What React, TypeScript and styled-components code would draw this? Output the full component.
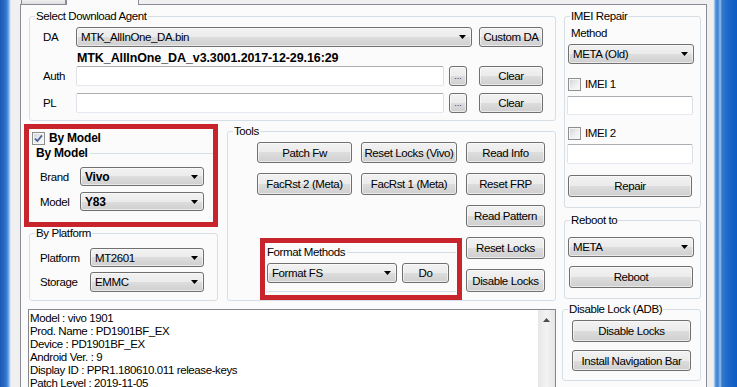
import styled, { createGlobalStyle } from "styled-components";

const GlobalStyle = createGlobalStyle`
  html, body { margin: 0; padding: 0; }
  body {
    width: 737px;
    height: 387px;
    overflow: hidden;
    font-family: "Liberation Sans", Arial, sans-serif;
    font-size: 11.5px;
    letter-spacing: -0.4px;
    color: #000;
  }
`;

const RED = "#c8242c";

const Screen = styled.div`
  display: flex;
  width: 737px;
  height: 387px;
  overflow: hidden;
`;

const FrameLeft = styled.div`
  width: 11px;
  flex: none;
  background: linear-gradient(to right, #1b57b0 0px, #2a6dc8 5px, #3f82d6 7px, #7fb0e6 9px, #c6dbf1 10px, #e9eef5 11px);
`;

const FrameRight = styled.div`
  width: 24px;
  flex: none;
  background: linear-gradient(to right, #eef2f7 0px, #d4e3f4 1px, #6fa3de 2px, #3f82d3 4px, #5b97dc 6px, #9cc3ec 7px, #3479d0 9px, #1f69c9 14px, #0e5cc4 24px);
`;

const WindowBody = styled.div`
  flex: 1;
  min-width: 0;
  display: flex;
  flex-direction: column;
  background: #f0f0f0;
  padding: 0 6px 0 9px;
`;

const TabStrip = styled.div`
  display: flex;
  height: 4px;
  padding-left: 1px;
`;

const Tab = styled.div<{ $active?: boolean }>`
  box-sizing: border-box;
  width: ${(p) => (p.$active ? 73 : 45)}px;
  height: ${(p) => (p.$active ? 5 : 4)}px;
  border-left: 1px solid #898c95;
  border-right: 1px solid #898c95;
  background: ${(p) => (p.$active ? "#fbfbfb" : "linear-gradient(#f0f0f0, #dedede)")};
  position: relative;
  z-index: 1;
`;

const Page = styled.div`
  flex: 1;
  border: 1px solid #898c95;
  border-bottom: none;
  background: #fbfbfb;
  padding: 4px 5px 0 8px;
  display: grid;
  grid-template-columns: 527px 137px;
  column-gap: 8px;
  align-items: start;
`;

const Column = styled.div`
  display: flex;
  flex-direction: column;
  min-width: 0;
`;

const GroupBox = styled.fieldset<{ $mt?: number; $ml?: number }>`
  margin: ${(p) => p.$mt ?? 0}px 0 0 ${(p) => p.$ml ?? 0}px;
  padding: 0;
  min-width: 0;
  border: 1px solid #d5dfe5;
  border-radius: 3px;
`;

const Legend = styled.legend`
  padding: 0 1px;
  margin-left: 5px;
  height: 14px;
  line-height: 14px;
`;

const Body = styled.div<{ $pad: string }>`
  padding: ${(p) => p.$pad};
  display: flex;
  flex-direction: column;
`;

const FormRow = styled.div<{ $mt?: number; $h?: number }>`
  display: flex;
  align-items: center;
  margin-top: ${(p) => p.$mt ?? 0}px;
  height: ${(p) => p.$h ?? 20}px;
`;

const RowLabel = styled.div<{ $w: number; $pad: number }>`
  box-sizing: border-box;
  width: ${(p) => p.$w}px;
  padding-left: ${(p) => p.$pad}px;
  flex: none;
`;

const Button = styled.button<{ $w: number; $h: number; $ml?: number; $mt?: number }>`
  box-sizing: border-box;
  width: ${(p) => p.$w}px;
  height: ${(p) => p.$h}px;
  margin: ${(p) => p.$mt ?? 0}px 0 0 ${(p) => p.$ml ?? 0}px;
  flex: none;
  padding: 0;
  border: 1px solid #707070;
  border-radius: 3px;
  background: linear-gradient(to bottom, #f2f2f2 0%, #ebebeb 50%, #dddddd 50%, #cfcfcf 100%);
  box-shadow: inset 0 0 0 1px rgba(255, 255, 255, 0.55);
  font: inherit;
  letter-spacing: inherit;
  color: #000;
  display: flex;
  align-items: center;
  justify-content: center;
`;

const DotsButton = styled(Button)`
  font-size: 9px;
  letter-spacing: 0;
  color: #333;
  align-items: flex-end;
  padding-bottom: 4px;
`;

const ToolButton = styled(Button)<{ $c: number; $r: number }>`
  width: auto;
  height: auto;
  grid-column: ${(p) => p.$c};
  grid-row: ${(p) => p.$r};
`;

const ComboBox = styled.div<{ $w: number; $h: number; $bold?: boolean; $mt?: number; $ml?: number }>`
  box-sizing: border-box;
  width: ${(p) => p.$w}px;
  height: ${(p) => p.$h}px;
  margin: ${(p) => p.$mt ?? 0}px 0 0 ${(p) => p.$ml ?? 0}px;
  flex: none;
  display: flex;
  align-items: center;
  justify-content: space-between;
  padding: 0 5px 0 4px;
  border: 1px solid #707070;
  border-radius: 3px;
  background: linear-gradient(to bottom, #f2f2f2 0%, #ebebeb 50%, #dddddd 50%, #cfcfcf 100%);
  box-shadow: inset 0 0 0 1px rgba(255, 255, 255, 0.55);
  font-weight: ${(p) => (p.$bold ? 700 : 400)};
  font-size: ${(p) => (p.$bold ? 12 : 11.5)}px;
  letter-spacing: ${(p) => (p.$bold ? -0.2 : -0.4)}px;
  white-space: nowrap;
`;

const TextBox = styled.div<{ $w: number; $h: number; $mt?: number; $ml?: number }>`
  box-sizing: border-box;
  width: ${(p) => p.$w}px;
  height: ${(p) => p.$h}px;
  margin: ${(p) => p.$mt ?? 0}px 0 0 ${(p) => p.$ml ?? 0}px;
  flex: none;
  background: #fff;
  border: 1px solid;
  border-color: #abadb3 #dbdfe6 #e3e9ef #e2e3ea;
  border-radius: 2px;
`;

const InfoLine = styled.div`
  margin-top: 4px;
  height: 14px;
  line-height: 14px;
  padding-left: 47px;
  font-weight: 700;
  font-size: 12.5px;
  letter-spacing: -0.1px;
  white-space: nowrap;
`;

const CheckRow = styled.div<{ $mt: number; $pl?: number }>`
  display: flex;
  align-items: center;
  height: 14px;
  margin-top: ${(p) => p.$mt}px;
  padding-left: ${(p) => p.$pl ?? 0}px;
`;

const CheckBox = styled.span`
  box-sizing: border-box;
  width: 13px;
  height: 13px;
  flex: none;
  border: 1px solid #8e8f8f;
  background: linear-gradient(135deg, #cfd2d6 0%, #eeeeee 55%, #fbfbfb 100%);
  box-shadow: inset 0 0 0 1px #f6f6f6;
  display: flex;
  align-items: center;
  justify-content: center;
`;

const CheckText = styled.span<{ $bold?: boolean }>`
  margin-left: 4px;
  font-weight: ${(p) => (p.$bold ? 700 : 400)};
  font-size: ${(p) => (p.$bold ? 12 : 11.5)}px;
  letter-spacing: ${(p) => (p.$bold ? -0.2 : -0.4)}px;
`;

const Caption = styled.div<{ $mt: number }>`
  margin-top: ${(p) => p.$mt}px;
  height: 14px;
  line-height: 14px;
  padding-left: 3px;
`;

const RedFrame = styled.div`
  box-sizing: border-box;
  width: 194px;
  height: 103px;
  margin: 3px 0 0 -5px;
  border: 5px solid ${RED};
  display: flex;
  flex-direction: column;
`;

const SubHead = styled.div<{ $mt: number; $pl: number; $bold?: boolean }>`
  display: flex;
  align-items: center;
  height: 14px;
  margin-top: ${(p) => p.$mt}px;
  padding-left: ${(p) => p.$pl}px;
  font-weight: ${(p) => (p.$bold ? 700 : 400)};
  font-size: ${(p) => (p.$bold ? 12 : 11.5)}px;
  letter-spacing: ${(p) => (p.$bold ? -0.2 : -0.4)}px;
  white-space: nowrap;
`;

const Rule = styled.div<{ $ml?: number; $mr?: number }>`
  flex: 1;
  height: 1px;
  background: #d5dfe5;
  margin: 0 ${(p) => p.$mr ?? 0}px 0 ${(p) => p.$ml ?? 0}px;
`;

const Row2 = styled.div`
  display: grid;
  grid-template-columns: 189px 329px;
  column-gap: 9px;
`;

const ToolsBox = styled(GroupBox)`
  margin-top: 3px;
  align-self: stretch;
`;

const ToolGrid = styled.div`
  display: grid;
  grid-template-columns: 95px 96px 79px;
  grid-template-rows: 21px 22px 22px 22px 23px;
  column-gap: 9px;
  row-gap: 10px;
  padding: 4px 0 8px 29px;
`;

const FormatFrame = styled.div`
  grid-column: 1 / 3;
  grid-row: 4 / 6;
  align-self: start;
  box-sizing: border-box;
  height: 62px;
  margin: 1px -5px 0 3px;
  border: 5px solid ${RED};
  display: flex;
  flex-direction: column;
`;

const BottomRule = styled.div`
  height: 1px;
  background: #d5dfe5;
  margin: 8px 1px 0 1px;
`;

const LogBox = styled.div`
  box-sizing: border-box;
  height: 90px;
  margin: 8px 0 0 -1px;
  border: 1px solid #828790;
  border-bottom: none;
  background: #fff;
  display: flex;
`;

const LogText = styled.div`
  flex: 1;
  padding: 2px 0 0 1px;
  line-height: 13px;
  white-space: pre;
`;

const ScrollTrack = styled.div`
  width: 17px;
  flex: none;
  background: linear-gradient(to right, #e6e6e6, #f3f3f3 50%, #e6e6e6);
  display: flex;
  justify-content: center;
  padding-top: 8px;
`;

const Arrow = ({ up }: { up?: boolean }) => (
  <svg width="7" height="4" viewBox="0 0 7 4">
    <path d={up ? "M0 4h7L3.5 0z" : "M0 0h7L3.5 4z"} fill={up ? "#4d4d4d" : "#000"} />
  </svg>
);

const Combo = (props: { w: number; h: number; bold?: boolean; mt?: number; ml?: number; children: string }) => (
  <ComboBox $w={props.w} $h={props.h} $bold={props.bold} $mt={props.mt} $ml={props.ml}>
    <span>{props.children}</span>
    <Arrow />
  </ComboBox>
);

const Check = ({ on }: { on?: boolean }) => (
  <CheckBox>
    {on && (
      <svg width="9" height="9" viewBox="0 0 9 9">
        <path d="M1 4.6L3.4 7L8 1.4" stroke="#4a5f93" strokeWidth="1.7" fill="none" />
      </svg>
    )}
  </CheckBox>
);

const logLines = [
  "Model : vivo 1901",
  "Prod. Name : PD1901BF_EX",
  "Device : PD1901BF_EX",
  "Android Ver. : 9",
  "Display ID : PPR1.180610.011 release-keys",
  "Patch Level : 2019-11-05",
];

export default function App() {
  return (
    <>
      <GlobalStyle />
      <Screen>
        <FrameLeft />
        <WindowBody>
          <TabStrip>
            <Tab />
            <Tab $active />
          </TabStrip>
          <Page>
            <Column>
              <GroupBox>
                <Legend>Select Download Agent</Legend>
                <Body $pad="0 12px 7px 0">
                  <FormRow $mt={4}>
                    <RowLabel $w={46} $pad={13}>DA</RowLabel>
                    <Combo w={396} h={20}>MTK_AllInOne_DA.bin</Combo>
                    <Button $w={64} $h={20} $ml={7}>Custom DA</Button>
                  </FormRow>
                  <InfoLine>MTK_AllInOne_DA_v3.3001.2017-12-29.16:29</InfoLine>
                  <FormRow $mt={1}>
                    <RowLabel $w={46} $pad={13}>Auth</RowLabel>
                    <TextBox $w={368} $h={20} />
                    <DotsButton $w={18} $h={20} $ml={5}>...</DotsButton>
                    <Button $w={64} $h={20} $ml={12}>Clear</Button>
                  </FormRow>
                  <FormRow $mt={7}>
                    <RowLabel $w={46} $pad={13}>PL</RowLabel>
                    <TextBox $w={368} $h={20} />
                    <DotsButton $w={18} $h={20} $ml={5}>...</DotsButton>
                    <Button $w={64} $h={20} $ml={12}>Clear</Button>
                  </FormRow>
                </Body>
              </GroupBox>

              <Row2>
                <Column>
                  <RedFrame>
                    <CheckRow $mt={2} $pl={3}>
                      <Check on />
                      <CheckText $bold>By Model</CheckText>
                    </CheckRow>
                    <SubHead $mt={1} $pl={7} $bold>
                      By Model
                      <Rule $ml={2} />
                    </SubHead>
                    <FormRow $mt={7} $h={19}>
                      <RowLabel $w={51} $pad={11}>Brand</RowLabel>
                      <Combo w={124} h={19} bold>Vivo</Combo>
                    </FormRow>
                    <FormRow $mt={6} $h={19}>
                      <RowLabel $w={51} $pad={11}>Model</RowLabel>
                      <Combo w={124} h={19} bold>Y83</Combo>
                    </FormRow>
                  </RedFrame>
                  <GroupBox $mt={-1}>
                    <Legend>By Platform</Legend>
                    <Body $pad="0 0 8px 0">
                      <FormRow $mt={8} $h={19}>
                        <RowLabel $w={60} $pad={10}>Platform</RowLabel>
                        <Combo w={114} h={19}>MT2601</Combo>
                      </FormRow>
                      <FormRow $mt={5}>
                        <RowLabel $w={60} $pad={10}>Storage</RowLabel>
                        <Combo w={114} h={20}>EMMC</Combo>
                      </FormRow>
                    </Body>
                  </GroupBox>
                </Column>

                <ToolsBox>
                  <Legend>Tools</Legend>
                  <ToolGrid>
                    <ToolButton $w={0} $h={0} $c={1} $r={1}>Patch Fw</ToolButton>
                    <ToolButton $w={0} $h={0} $c={2} $r={1}>Reset Locks (Vivo)</ToolButton>
                    <ToolButton $w={0} $h={0} $c={3} $r={1}>Read Info</ToolButton>
                    <ToolButton $w={0} $h={0} $c={1} $r={2}>FacRst 2 (Meta)</ToolButton>
                    <ToolButton $w={0} $h={0} $c={2} $r={2}>FacRst 1 (Meta)</ToolButton>
                    <ToolButton $w={0} $h={0} $c={3} $r={2}>Reset FRP</ToolButton>
                    <ToolButton $w={0} $h={0} $c={3} $r={3}>Read Pattern</ToolButton>
                    <ToolButton $w={0} $h={0} $c={3} $r={4}>Reset Locks</ToolButton>
                    <ToolButton $w={0} $h={0} $c={3} $r={5}>Disable Locks</ToolButton>
                    <FormatFrame>
                      <SubHead $mt={2} $pl={2}>
                        Format Methods
                        <Rule $ml={2} $mr={1} />
                      </SubHead>
                      <FormRow $mt={4}>
                        <Combo w={130} h={20} ml={2}>Format FS</Combo>
                        <Button $w={47} $h={20} $ml={5}>Do</Button>
                      </FormRow>
                      <BottomRule />
                    </FormatFrame>
                  </ToolGrid>
                </ToolsBox>
              </Row2>

              <LogBox>
                <LogText>{logLines.join("\n")}</LogText>
                <ScrollTrack>
                  <Arrow up />
                </ScrollTrack>
              </LogBox>
            </Column>

            <Column>
              <GroupBox>
                <Legend>IMEI Repair</Legend>
                <Body $pad="0 0 10px 3px">
                  <Caption $mt={3}>Method</Caption>
                  <Combo w={126} h={20} mt={4}>META (Old)</Combo>
                  <CheckRow $mt={13}>
                    <Check />
                    <CheckText>IMEI 1</CheckText>
                  </CheckRow>
                  <TextBox $w={126} $h={19} $mt={5} $ml={-1} />
                  <CheckRow $mt={11}>
                    <Check />
                    <CheckText>IMEI 2</CheckText>
                  </CheckRow>
                  <TextBox $w={126} $h={20} $mt={4} $ml={-1} />
                  <Button $w={124} $h={22} $mt={11}>Repair</Button>
                </Body>
              </GroupBox>
              <GroupBox $mt={5}>
                <Legend>Reboot to</Legend>
                <Body $pad="0 0 10px 3px">
                  <Combo w={126} h={20} mt={10}>META</Combo>
                  <Button $w={124} $h={22} $mt={9} $ml={1}>Reboot</Button>
                </Body>
              </GroupBox>
              <GroupBox $mt={3} $ml={-2}>
                <Legend>Disable Lock (ADB)</Legend>
                <Body $pad="0 0 9px 9px">
                  <Button $w={119} $h={22} $mt={4}>Disable Locks</Button>
                  <Button $w={119} $h={21} $mt={8}>Install Navigation Bar</Button>
                </Body>
              </GroupBox>
            </Column>
          </Page>
        </WindowBody>
        <FrameRight />
      </Screen>
    </>
  );
}
